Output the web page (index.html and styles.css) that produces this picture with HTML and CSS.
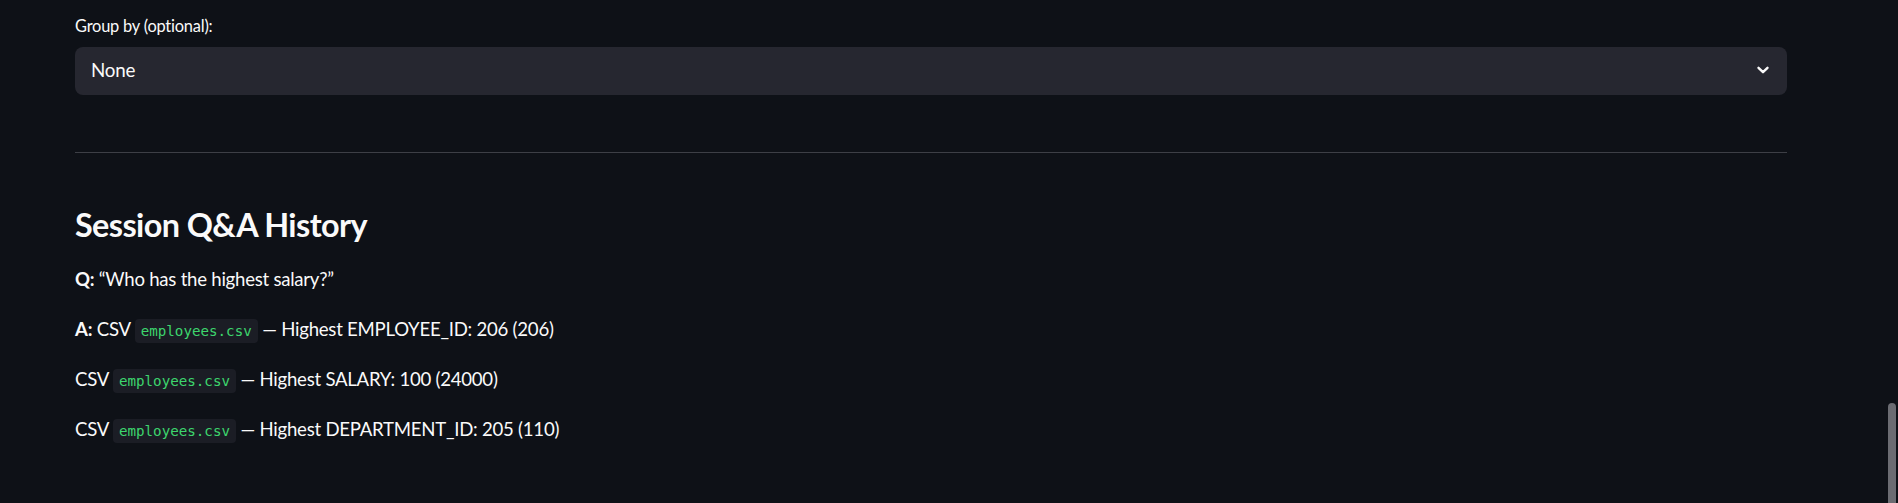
FILE: index.html
```html
<!DOCTYPE html>
<html lang="en">
<head>
<meta charset="utf-8">
<title>Session Q&amp;A History</title>
<link rel="stylesheet" href="styles.css">
</head>
<body>
<main class="main">
  <section class="block">
    <div class="field">
      <label class="field-label">Group by (optional):</label>
      <div class="select">
        <span class="select-value">None</span>
        <svg class="chevron" width="14" height="14" viewBox="0 0 14 14" aria-hidden="true">
          <path d="M2.5 4.8 L7 9.2 L11.5 4.8" fill="none" stroke="#fafafa" stroke-width="2.4" stroke-linecap="round" stroke-linejoin="round"/>
        </svg>
      </div>
    </div>
    <hr class="divider">
    <h3 class="heading">Session Q&amp;A History</h3>
    <p class="para"><strong>Q:</strong> “Who has the highest salary?”</p>
    <p class="para"><strong>A:</strong> CSV <code class="code">employees.csv</code> — Highest EMPLOYEE_ID: 206 (206)</p>
    <p class="para">CSV <code class="code">employees.csv</code> — Highest SALARY: 100 (24000)</p>
    <p class="para">CSV <code class="code">employees.csv</code> — Highest DEPARTMENT_ID: 205 (110)</p>
  </section>
</main>
<div class="scroll-thumb"></div>
</body>
</html>
```

FILE: styles.css
```css
html, body {
  margin: 0;
  padding: 0;
  background: #0e1117;
  color: #fafafa;
  font-family: "Source Sans Pro", Lato, "Liberation Sans", sans-serif;
  overflow: hidden;
}

.main {
  height: 503px;
}

.block {
  width: 1712px;
  padding-left: 75px;
  padding-top: 14px;
}

.field-label {
  display: block;
  font-size: 16.4px;
  line-height: 24px;
  height: 24px;
  margin-bottom: 9px;
  letter-spacing: -0.2px;
}

.select {
  display: flex;
  align-items: center;
  justify-content: space-between;
  height: 48px;
  background: #262730;
  border-radius: 8px;
  padding: 0 16px 3px 16px;
  box-sizing: border-box;
}

.select-value {
  font-size: 18.8px;
  letter-spacing: -0.2px;
}

.chevron {
  display: block;
  margin-right: 1px;
  margin-top: 1px;
}

.divider {
  border: none;
  border-bottom: 1px solid #3d3f46;
  margin: 57px 0 0 0;
  height: 0;
}

.heading {
  font-size: 32.4px;
  font-weight: 700;
  line-height: 40px;
  margin: 52px 0 0 0;
  letter-spacing: -0.6px;
}

.para {
  font-size: 18.6px;
  line-height: 30.7px;
  margin: 0;
  letter-spacing: -0.25px;
}

.heading + .para {
  margin-top: 19px;
}

.para + .para {
  margin-top: 19.3px;
}

.para strong {
  font-weight: 700;
}

.code {
  font-family: "DejaVu Sans Mono", "Liberation Mono", monospace;
  font-size: 14.2px;
  line-height: 1;
  letter-spacing: 0;
  color: #3dd56d;
  background: #1b1d25;
  border-radius: 4px;
  padding: 4px 6px;
}

.scroll-thumb {
  position: fixed;
  right: 2px;
  top: 403px;
  width: 8px;
  height: 110px;
  background: #6b6c72;
  border-radius: 4px 4px 0 0;
}
```
